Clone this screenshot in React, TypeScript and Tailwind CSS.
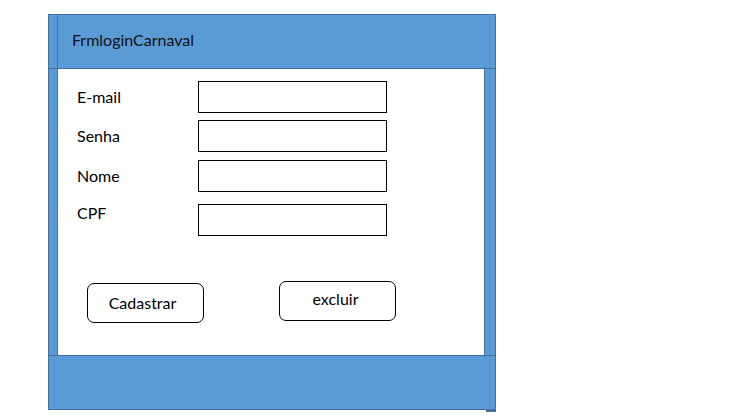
const fields = [
  { label: "E-mail", gap: "mt-0", labelShift: "" },
  { label: "Senha", gap: "mt-[7px]", labelShift: "" },
  { label: "Nome", gap: "mt-[8px]", labelShift: "" },
  { label: "CPF", gap: "mt-[12px]", labelShift: "-mt-[14px]" },
];

export default function App() {
  return (
    <div className="min-h-screen bg-white pl-[48px] pt-[14px] text-black" style={{ fontFamily: "Lato, 'Open Sans', sans-serif" }}>
      <div className="w-[448px]">
        <div className="box-border flex h-[396px] w-[448px] flex-col border border-[#41719C] bg-[#5B9BD5]">
          {/* title bar */}
          <div className="flex h-[54px] border-b border-[#41719C]">
            <div className="w-[9px] border-r border-[#41719C]" />
            <div className="pl-[14px] pt-[15px] text-[16px] leading-[20px] text-[#111]">FrmloginCarnaval</div>
          </div>

          {/* body */}
          <div className="flex h-[286px]">
            <div className="w-[9px] border-r border-[#41719C]" />
            <div className="flex-1 bg-white pl-[19px] pt-[12px]">
              {fields.map((f) => (
                <div key={f.label} className={`flex items-center ${f.gap}`}>
                  <div className={`w-[121px] text-[16px] leading-[20px] ${f.labelShift}`}>{f.label}</div>
                  <div className="box-border h-[32px] w-[189px] border border-black bg-white" />
                </div>
              ))}

              <div className="mt-[45px] flex items-start pl-[10px]">
                <button className="mt-[2px] box-border h-[40px] w-[117px] rounded-[7px] border border-black bg-white pr-[6px] text-[16px] leading-[20px]">
                  Cadastrar
                </button>
                <button className="ml-[75px] box-border h-[40px] w-[117px] rounded-[7px] border border-black bg-white pr-[4px] pb-[4px] text-[16px] leading-[20px]">
                  excluir
                </button>
              </div>
            </div>
            <div className="w-[11px] border-l border-[#41719C]" />
          </div>

          {/* footer */}
          <div className="h-[54px] border-t border-[#41719C]" />
        </div>
        <div className="ml-auto h-[2px] w-[10px] bg-[#41719C]" />
      </div>
    </div>
  );
}
